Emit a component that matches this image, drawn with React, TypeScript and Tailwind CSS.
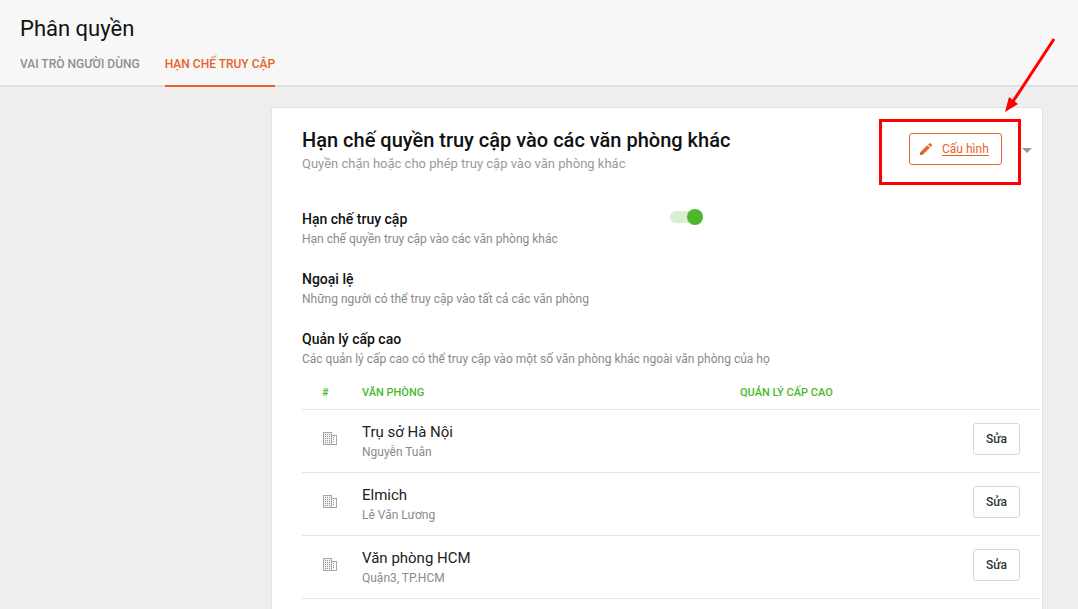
import React from "react";

const PencilIcon = () => (
  <svg width="16" height="16" viewBox="0 0 24 24" fill="#e8632a">
    <path d="M3 17.25V21h3.75L17.81 9.94l-3.75-3.75L3 17.25zM20.71 7.04a1 1 0 0 0 0-1.41l-2.34-2.34a1 1 0 0 0-1.41 0l-1.83 1.83 3.75 3.75 1.83-1.83z" />
  </svg>
);

const BuildingIcon = () => (
  <svg className="block" width="14" height="13" viewBox="0 0 14 13" fill="none" stroke="#a6a6a6" strokeWidth="1">
    <rect x="0.5" y="0.5" width="8" height="12" fill="#f4f4f4" />
    <rect x="8.5" y="3.5" width="5" height="9" fill="#fbfbfb" />
    <path d="M2 2.5h5M2 4.5h5M2 6.5h5M2 8.5h5M2 10.5h5M10 5.5h2M10 7.5h2M10 9.5h2" strokeDasharray="1 1" stroke="#8c8c8c" />
  </svg>
);

const rows = [
  { name: "Trụ sở Hà Nội", sub: "Nguyễn Tuân" },
  { name: "Elmich", sub: "Lê Văn Lương" },
  { name: "Văn phòng HCM", sub: "Quận3, TP.HCM" },
];

function Section({ title, desc, last, children }: { title: string; desc: string; last?: boolean; children?: React.ReactNode }) {
  return (
    <div className={last ? "relative h-[49px]" : "relative h-[60px]"}>
      <div className="text-[14px] leading-[20px] font-medium text-[#111]">{title}</div>
      <div className="mt-[1px] text-[12px] leading-[18px] text-[#8a8a8a]">{desc}</div>
      {children}
    </div>
  );
}

export default function App() {
  return (
    <div className="relative h-[609px] w-[1078px] overflow-hidden bg-[#eeeeee] font-['Roboto',sans-serif]">
      <header className="h-[87px] border-b-2 border-[#e0e0e0] bg-[#f7f7f7] pl-5">
        <h1 className="pt-[15px] text-[22px] leading-[28px] font-normal text-[#111]">Phân quyền</h1>
        <nav className="mt-[3px] flex gap-[25px]">
          <div className="pt-[8px] h-[41px] text-[12px] leading-[20px] font-medium text-[#8f8f8f]">VAI TRÒ NGƯỜI DÙNG</div>
          <div className="h-[41px] border-b-2 border-[#e8632a] pt-[8px] text-[12px] leading-[20px] font-medium text-[#e8632a]">HẠN CHẾ TRUY CẬP</div>
        </nav>
      </header>

      <main className="ml-[271px] mt-[20px] w-[772px] rounded-[3px] border border-[#e2e2e2] bg-white pl-[30px] pr-[2px] pt-[19px] h-[600px]">
        <div className="flex h-[82px] items-start">
          <div className="flex-1">
            <div className="text-[20px] leading-[26px] font-medium text-[#111]">Hạn chế quyền truy cập vào các văn phòng khác</div>
            <div className="mt-[2px] text-[13px] leading-[18px] text-[#9a9a9a]">Quyền chặn hoặc cho phép truy cập vào văn phòng khác</div>
          </div>
          <button className="mt-[6px] flex h-[32px] w-[93px] items-center gap-[8px] rounded-[3px] border border-[#e8632a] bg-white pl-[8px] text-[12px] text-[#e8632a]">
            <PencilIcon />
            <span className="underline underline-offset-2">Cấu hình</span>
          </button>
          <div className="mt-[21px] ml-[20px] mr-[8px] h-0 w-0 border-x-[5px] border-t-[5px] border-x-transparent border-t-[#999]" />
        </div>

        <Section title="Hạn chế truy cập" desc="Hạn chế quyền truy cập vào các văn phòng khác">
          <div className="absolute left-[368px] top-[2px] h-[12px] w-[30px] rounded-full bg-[#d9efd3]" />
          <div className="absolute left-[385px] top-0 h-[16px] w-[16px] rounded-full bg-[#4ab82a]" />
        </Section>
        <Section title="Ngoại lệ" desc="Những người có thể truy cập vào tất cả các văn phòng" />
        <Section last title="Quản lý cấp cao" desc="Các quản lý cấp cao có thể truy cập vào một số văn phòng khác ngoài văn phòng của họ" />

        <div className="-mt-[1px] flex h-[33px] items-center border-b border-[#e6e6e6] text-[11px] font-medium text-[#4ab82a]">
          <div className="w-[60px] pl-[20px]">#</div>
          <div className="w-[378px]">VĂN PHÒNG</div>
          <div>QUẢN LÝ CẤP CAO</div>
        </div>
        {rows.map((r) => (
          <div key={r.name} className="flex h-[63px] items-center border-b border-[#e6e6e6]">
            <div className="mb-[5px] w-[60px] pl-[21px]"><BuildingIcon /></div>
            <div className="flex-1">
              <div className="text-[15px] leading-[22px] text-[#222]">{r.name}</div>
              <div className="text-[12px] leading-[18px] text-[#8a8a8a]">{r.sub}</div>
            </div>
            <button className="mr-5 mb-[4px] h-[32px] w-[47px] rounded-[3px] border border-[#d8d8d8] bg-white text-[12px] font-medium text-[#333]">Sửa</button>
          </div>
        ))}
      </main>

      <div className="absolute left-[879px] top-[119px] h-[66px] w-[142px] border-[3px] border-[#ff0000]" />
      <svg className="absolute left-[1000px] top-[35px]" width="60" height="80" viewBox="0 0 60 80" fill="none">
        <path d="M54 4 L12 68" stroke="#ff0000" strokeWidth="3" />
        <path d="M5 77 L9 62 L18 69 Z" fill="#ff0000" />
      </svg>
    </div>
  );
}
